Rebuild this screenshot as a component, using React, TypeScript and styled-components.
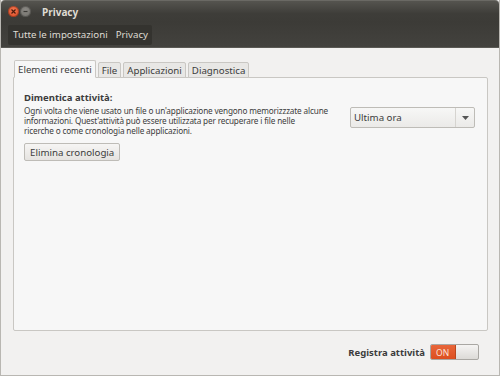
import React from "react";
import styled, { createGlobalStyle } from "styled-components";

const Global = createGlobalStyle`
  html, body { margin: 0; padding: 0; }
  body { width: 500px; height: 376px; overflow: hidden; font-family: "Noto Sans", "DejaVu Sans", sans-serif; }
  #root { width: 500px; height: 376px; }
`;

const Window = styled.div`
  width: 500px;
  height: 376px;
  display: flex;
  flex-direction: column;
  box-sizing: border-box;
  border-left: 1px solid #b9b7b2;
  border-right: 1px solid #b9b7b2;
  border-bottom: 1px solid #b9b7b2;
  background: #f2f1f0;
`;

const TitleBar = styled.div`
  height: 22px;
  flex: none;
  display: flex;
  align-items: center;
  padding-left: 7px;
  gap: 1px;
  background: linear-gradient(#55544f, #3e3d39 60%, #3c3b37);
  border-top: 1px solid #6a6964;
  box-sizing: border-box;
  border-radius: 4px 4px 0 0;
`;

const Dot = styled.div<{ $c: string }>`
  width: 11px;
  height: 11px;
  border-radius: 50%;
  background: ${(p) => p.$c};
  display: flex;
  align-items: center;
  justify-content: center;
  box-shadow: inset 0 0 0 1px rgba(0,0,0,0.25);
`;

const Title = styled.span`
  color: #dfdbd2;
  font-weight: bold;
  font-size: 10px;
  margin-left: 10px;
`;

const Toolbar = styled.div`
  height: 26px;
  flex: none;
  background: linear-gradient(#3c3b37, #43423e);
  border-bottom: 1px solid #5a5954;
  display: flex;
  align-items: center;
  padding-left: 7px;
  box-sizing: border-box;
`;

const Crumbs = styled.div`
  display: flex;
  height: 20px;
  align-items: center;
  background: #34332f;
  border-radius: 2px;
  padding: 0 4px 0 5px;
  gap: 8px;
`;

const Crumb = styled.span`
  color: #dfdbd2;
  font-size: 9.7px;
`;

const Body = styled.div`
  flex: 1;
  display: flex;
  flex-direction: column;
  padding: 12px 11px 0 12px;
`;

const Tabs = styled.div`
  display: flex;
  align-items: flex-end;
  gap: 2px;
  height: 18px;
  padding-left: 1px;
  margin-bottom: -1px;
  position: relative;
  z-index: 1;
`;

const Tab = styled.div<{ $active?: boolean }>`
  height: ${(p) => (p.$active ? "18px" : "16px")};
  box-sizing: border-box;
  padding: 0 3px;
  font-size: 9.7px;
  color: #3c3c3c;
  display: flex;
  align-items: center;
  border: 1px solid #c9c7c3;
  border-bottom: ${(p) => (p.$active ? "1px solid #f7f7f7" : "1px solid #c9c7c3")};
  background: ${(p) => (p.$active ? "#f7f7f7" : "#e8e7e5")};
  border-radius: 2px 2px 0 0;
`;

const Panel = styled.div`
  height: 254px;
  background: #f7f7f7;
  border: 1px solid #c9c7c3;
  border-radius: 0 2px 2px 2px;
  display: flex;
  padding: 14px 12px 0 10px;
  box-sizing: border-box;
  gap: 14px;
`;

const Left = styled.div`
  flex: 1;
  display: flex;
  flex-direction: column;
  align-items: flex-start;
`;

const Heading = styled.div`
  font-weight: bold;
  font-size: 9.5px;
  line-height: 12px;
  color: #3c3c3c;
  margin-bottom: 2px;
`;

const Para = styled.div`
  font-size: 8.2px;
  letter-spacing: -0.15px;
  line-height: 10px;
  color: #3c3c3c;
  white-space: nowrap;
`;

const Button = styled.div`
  margin-top: 7px;
  height: 18px;
  box-sizing: border-box;
  border: 1px solid #bebcb7;
  border-radius: 2px;
  background: linear-gradient(#f6f5f4, #e5e3e0);
  font-size: 9.7px;
  color: #3c3c3c;
  padding: 0 5px;
  display: flex;
  align-items: center;
`;

const Combo = styled.div`
  flex: none;
  margin-top: 15px;
  width: 125px;
  height: 21px;
  box-sizing: border-box;
  border: 1px solid #bebcb7;
  border-radius: 2px;
  background: linear-gradient(#f7f7f6, #ebeae8);
  display: flex;
  align-items: stretch;
`;

const ComboText = styled.div`
  flex: 1;
  font-size: 9.7px;
  color: #3c3c3c;
  display: flex;
  align-items: center;
  padding-left: 3px;
`;

const ComboArrow = styled.div`
  width: 18px;
  border-left: 1px solid #d6d4d0;
  display: flex;
  align-items: center;
  justify-content: center;
`;

const Footer = styled.div`
  flex: 1;
  display: flex;
  justify-content: flex-end;
  align-items: center;
  gap: 5px;
  padding-right: 9px;
  padding-bottom: 2px;
`;

const FooterLabel = styled.span`
  font-weight: bold;
  font-size: 9.5px;
  color: #3c3c3c;
`;

const Switch = styled.div`
  width: 49px;
  height: 16px;
  border: 1px solid #a9a7a3;
  border-radius: 2px;
  box-sizing: border-box;
  display: flex;
  overflow: hidden;
  background: linear-gradient(#f5f4f3, #dcdad7);
`;

const SwitchOn = styled.div`
  width: 25px;
  background: linear-gradient(#e8663a, #dd4f20);
  color: #fbe6dc;
  font-size: 8.5px;
  display: flex;
  align-items: center;
  padding-left: 5px;
  box-sizing: border-box;
  border-right: 1px solid #b9471f;
`;

export default function App() {
  return (
    <>
      <Global />
      <Window>
        <TitleBar>
          <Dot $c="radial-gradient(circle at 50% 40%, #f27a55, #d8431c)">
            <svg width="7" height="7" viewBox="0 0 7 7">
              <path d="M1.5 1.5 L5.5 5.5 M5.5 1.5 L1.5 5.5" stroke="#4a1a0c" strokeWidth="1.2" />
            </svg>
          </Dot>
          <Dot $c="radial-gradient(circle at 50% 40%, #8d8b86, #6c6a65)">
            <svg width="7" height="7" viewBox="0 0 7 7">
              <path d="M1.5 3.5 L5.5 3.5" stroke="#3c3b37" strokeWidth="1.2" />
            </svg>
          </Dot>
          <Title>Privacy</Title>
        </TitleBar>
        <Toolbar>
          <Crumbs>
            <Crumb>Tutte le impostazioni</Crumb>
            <Crumb>Privacy</Crumb>
          </Crumbs>
        </Toolbar>
        <Body>
          <Tabs>
            <Tab $active>Elementi recenti</Tab>
            <Tab>File</Tab>
            <Tab>Applicazioni</Tab>
            <Tab>Diagnostica</Tab>
          </Tabs>
          <Panel>
            <Left>
              <Heading>Dimentica attività:</Heading>
              <Para>
                Ogni volta che viene usato un file o un'applicazione vengono memorizzzate alcune
                <br />
                informazioni. Quest'attività può essere utilizzata per recuperare i file nelle
                <br />
                ricerche o come cronologia nelle applicazioni.
              </Para>
              <Button>Elimina cronologia</Button>
            </Left>
            <Combo>
              <ComboText>Ultima ora</ComboText>
              <ComboArrow>
                <svg width="7" height="4" viewBox="0 0 7 4">
                  <path d="M0 0 L7 0 L3.5 4 Z" fill="#555" />
                </svg>
              </ComboArrow>
            </Combo>
          </Panel>
          <Footer>
            <FooterLabel>Registra attività</FooterLabel>
            <Switch>
              <SwitchOn>ON</SwitchOn>
            </Switch>
          </Footer>
        </Body>
      </Window>
    </>
  );
}
